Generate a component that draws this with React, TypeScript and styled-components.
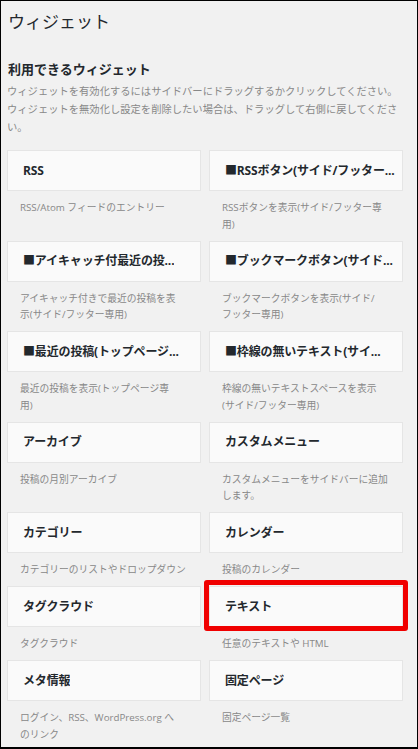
import React from "react";
import styled, { createGlobalStyle } from "styled-components";

const GlobalStyle = createGlobalStyle`
  html, body { margin: 0; padding: 0; background: #ffffff; }
  body { font-family: "Open Sans", "Noto Sans CJK JP", "Noto Sans", sans-serif; }
  * { box-sizing: border-box; }
`;

const Frame = styled.div`
  width: 418px;
  height: 749px;
  overflow: hidden;
  background: #f1f1f1;
  border: 1px solid #000;
  border-bottom-width: 2px;
  padding: 0 14px 0 6px;
  font-family: "Open Sans", "Noto Sans CJK JP", "Noto Sans", sans-serif;
`;

const PageTitle = styled.h1`
  margin: 10px 0 0 1px;
  font-size: 17px;
  line-height: 22px;
  font-weight: 400;
  color: #23282d;
`;

const SectionTitle = styled.h2`
  margin: 26.5px 0 0 1px;
  font-size: 13px;
  line-height: 18px;
  font-weight: 700;
  color: #23282d;
`;

const Intro = styled.p`
  margin: 4.5px 0 0 0;
  font-size: 10.3px;
  line-height: 18px;
  color: #888888;
`;

const WidgetGrid = styled.div`
  margin-top: 14px;
  display: grid;
  grid-template-columns: 194px 194px;
  column-gap: 8px;
`;

const WidgetItem = styled.div`
  display: flex;
  flex-direction: column;
`;

const WidgetCard = styled.div`
  position: relative;
  height: 41px;
  display: flex;
  align-items: center;
  padding: 0 2px 0 15px;
  background: #fafafa;
  border: 1px solid #e5e5e5;
`;

const WidgetTitle = styled.h3`
  margin: 0;
  font-size: 12px;
  line-height: 16px;
  font-weight: 700;
  letter-spacing: -0.15px;
  color: #23282d;
  white-space: nowrap;
  overflow: hidden;
`;

const Highlight = styled.span`
  position: absolute;
  top: -7px;
  left: -6px;
  right: -6px;
  bottom: -5px;
  border: 5px solid #f00000;
  border-radius: 3px;
  pointer-events: none;
`;

const WidgetDescription = styled.p`
  margin: 0;
  padding: 9px 6px 7.5px 13px;
  font-size: 9.75px;
  line-height: 16.5px;
  color: #888888;
  white-space: pre-line;
`;

type Widget = { title: string; desc: string; highlighted?: boolean };

const widgets: Widget[] = [
  { title: "RSS", desc: "RSS/Atom フィードのエントリー" },
  { title: "■RSSボタン(サイド/フッター...", desc: "RSSボタンを表示(サイド/フッター専\n用)" },
  { title: "■アイキャッチ付最近の投...", desc: "アイキャッチ付きで最近の投稿を表\n示(サイド/フッター専用)" },
  { title: "■ブックマークボタン(サイド...", desc: "ブックマークボタンを表示(サイド/\nフッター専用)" },
  { title: "■最近の投稿(トップページ...", desc: "最近の投稿を表示(トップページ専\n用)" },
  { title: "■枠線の無いテキスト(サイ...", desc: "枠線の無いテキストスペースを表示\n(サイド/フッター専用)" },
  { title: "アーカイブ", desc: "投稿の月別アーカイブ" },
  { title: "カスタムメニュー", desc: "カスタムメニューをサイドバーに追加\nします。" },
  { title: "カテゴリー", desc: "カテゴリーのリストやドロップダウン" },
  { title: "カレンダー", desc: "投稿のカレンダー" },
  { title: "タグクラウド", desc: "タグクラウド" },
  { title: "テキスト", desc: "任意のテキストや HTML", highlighted: true },
  { title: "メタ情報", desc: "ログイン、RSS、WordPress.org へ\nのリンク" },
  { title: "固定ページ", desc: "固定ページ一覧" },
];

export default function App() {
  return (
    <>
      <GlobalStyle />
      <Frame>
        <PageTitle>ウィジェット</PageTitle>
        <SectionTitle>利用できるウィジェット</SectionTitle>
        <Intro>
          ウィジェットを有効化するにはサイドバーにドラッグするかクリックしてください。ウィジェットを無効化し設定を削除したい場合は、ドラッグして右側に戻してください。
        </Intro>
        <WidgetGrid>
          {widgets.map((w) => (
            <WidgetItem key={w.title}>
              <WidgetCard>
                <WidgetTitle>{w.title}</WidgetTitle>
                {w.highlighted && <Highlight />}
              </WidgetCard>
              <WidgetDescription>{w.desc}</WidgetDescription>
            </WidgetItem>
          ))}
        </WidgetGrid>
      </Frame>
    </>
  );
}
